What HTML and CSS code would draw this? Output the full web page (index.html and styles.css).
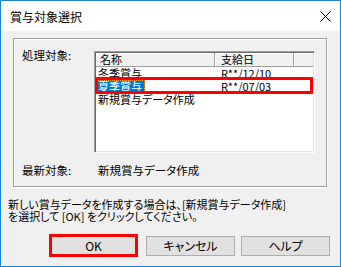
FILE: index.html
```html
<!DOCTYPE html>
<html lang="ja">
<head>
    <meta charset="UTF-8">
    <title>賞与対象選択</title>
    <link rel="stylesheet" href="styles.css">
</head>
<body>
    <div class="window">
        <div class="titlebar">
            <span class="title">賞与対象選択</span>
            <svg class="close" width="11" height="11" viewBox="0 0 11 11">
                <path d="M0.5 0.5 L10.5 10.5 M10.5 0.5 L0.5 10.5" stroke="#000" stroke-width="1" fill="none"/>
            </svg>
        </div>
        <div class="client">
            <div class="group">
                <div class="row-target">
                    <div class="label">処理対象:</div>
                    <div class="list">
                        <div class="list-head">
                            <div class="col col-name">名称</div>
                            <div class="col col-date">支給日</div>
                            <div class="col col-fill"></div>
                        </div>
                        <div class="list-row">
                            <div class="cell cell-name"><span>冬季賞与</span></div>
                            <div class="cell cell-date">R**/12/10</div>
                        </div>
                        <div class="list-row">
                            <div class="cell cell-name"><span class="selected">夏季賞与</span></div>
                            <div class="cell cell-date">R**/07/03</div>
                        </div>
                        <div class="list-row">
                            <div class="cell cell-name"><span>新規賞与データ作成</span></div>
                            <div class="cell cell-date"></div>
                        </div>
                        <div class="mark mark-row"></div>
                    </div>
                </div>
                <div class="row-latest">
                    <div class="label label-latest">最新対象:</div>
                    <div class="value">新規賞与データ作成</div>
                </div>
            </div>
            <div class="message">
                <div>新しい賞与データを作成する場合は、[新規賞与データ作成]</div>
                <div>を選択して [OK] をクリックしてください。</div>
            </div>
            <div class="buttons">
                <div class="ok-wrap">
                    <button class="btn btn-ok">OK</button>
                </div>
                <button class="btn">キャンセル</button>
                <button class="btn">ヘルプ</button>
            </div>
        </div>
    </div>
</body>
</html>
```

FILE: styles.css
```css
* {
    box-sizing: border-box;
}
body {
    margin: 0;
    background-color: #fff;
    font-family: "Noto Sans CJK JP", sans-serif;
    font-size: 11.5px;
    font-feature-settings: "palt";
    color: #000;
}
.window {
    width: 341px;
    height: 267px;
    border: 1px solid #1883d7;
    display: flex;
    flex-direction: column;
}
.titlebar {
    height: 30px;
    background-color: #fff;
    display: flex;
    align-items: center;
    justify-content: space-between;
    padding: 1px 9px 0 9px;
}
.title {
    font-size: 12px;
    line-height: 14px;
}
.close {
    display: block;
}
.client {
    flex: 1;
    background-color: #f0f0f0;
    padding-top: 7px;
}
.group {
    margin-left: 12px;
    width: 314px;
    height: 149px;
    border: 1px solid #a0a0a0;
    box-shadow: inset 1px 1px #fff, 1px 1px #fff;
}
.row-target {
    display: flex;
    align-items: flex-start;
}
.label {
    width: 80px;
    padding-left: 8px;
    margin-top: 10px;
    line-height: 13px;
}
.list {
    position: relative;
    margin-top: 12px;
    width: 221px;
    height: 102px;
    background-color: #fff;
    border: 1px solid;
    border-color: #a0a0a0 #fff #fff #a0a0a0;
    box-shadow: inset 1px 1px #696969, inset -1px -1px #e3e3e3;
    padding: 1px;
    font-size: 11px;
}
.list-head {
    display: flex;
    height: 14px;
    line-height: 13px;
}
.col {
    background-color: #f0f0f0;
    border-right: 1px solid #a0a0a0;
    border-bottom: 1px solid #a0a0a0;
    box-shadow: inset 1px 1px #fff;
}
.col-name {
    width: 119px;
    padding-left: 4px;
}
.col-date {
    width: 79px;
    padding-left: 6px;
}
.col-fill {
    flex: 1;
    border-right: none;
}
.list-row {
    display: flex;
    height: 13px;
    line-height: 13px;
}
.cell-name {
    width: 119px;
    padding-left: 1px;
}
.cell-name span {
    padding: 0 3px 0 1px;
}
.cell-date {
    width: 79px;
    padding-left: 6px;
}
.selected {
    display: inline-block;
    background-color: #0078d7;
    color: #fff;
    outline: 1px dotted #f0a040;
    outline-offset: -1px;
    padding: 0 8px 0 1px;
}
.mark {
    position: absolute;
    border: 3px solid #ff0000;
}
.mark-row {
    left: 0;
    top: 25px;
    width: 218px;
    height: 17px;
}
.row-latest {
    display: flex;
    margin-top: 11px;
    line-height: 13px;
}
.label-latest {
    width: 84px;
    margin-top: 0;
}
.message {
    padding-left: 7px;
    margin-top: 11px;
    line-height: 12px;
    font-size: 11px;
}
.buttons {
    display: flex;
    justify-content: flex-end;
    align-items: center;
    padding-right: 10px;
    margin-top: 12px;
}
.btn {
    width: 89px;
    height: 20px;
    margin-left: 6px;
    padding: 0;
    background-color: #e1e1e1;
    border: 1px solid #adadad;
    font-family: "Noto Sans CJK JP", sans-serif;
    font-size: 12px;
    font-feature-settings: "palt";
    line-height: 16px;
    color: #000;
}
.ok-wrap {
    border: 3px solid #ff0000;
    width: 89px;
    height: 23px;
    margin-right: 2px;
    display: flex;
}
.ok-wrap .btn-ok {
    width: 100%;
    height: 100%;
    margin: 0;
    border: none;
}
```
